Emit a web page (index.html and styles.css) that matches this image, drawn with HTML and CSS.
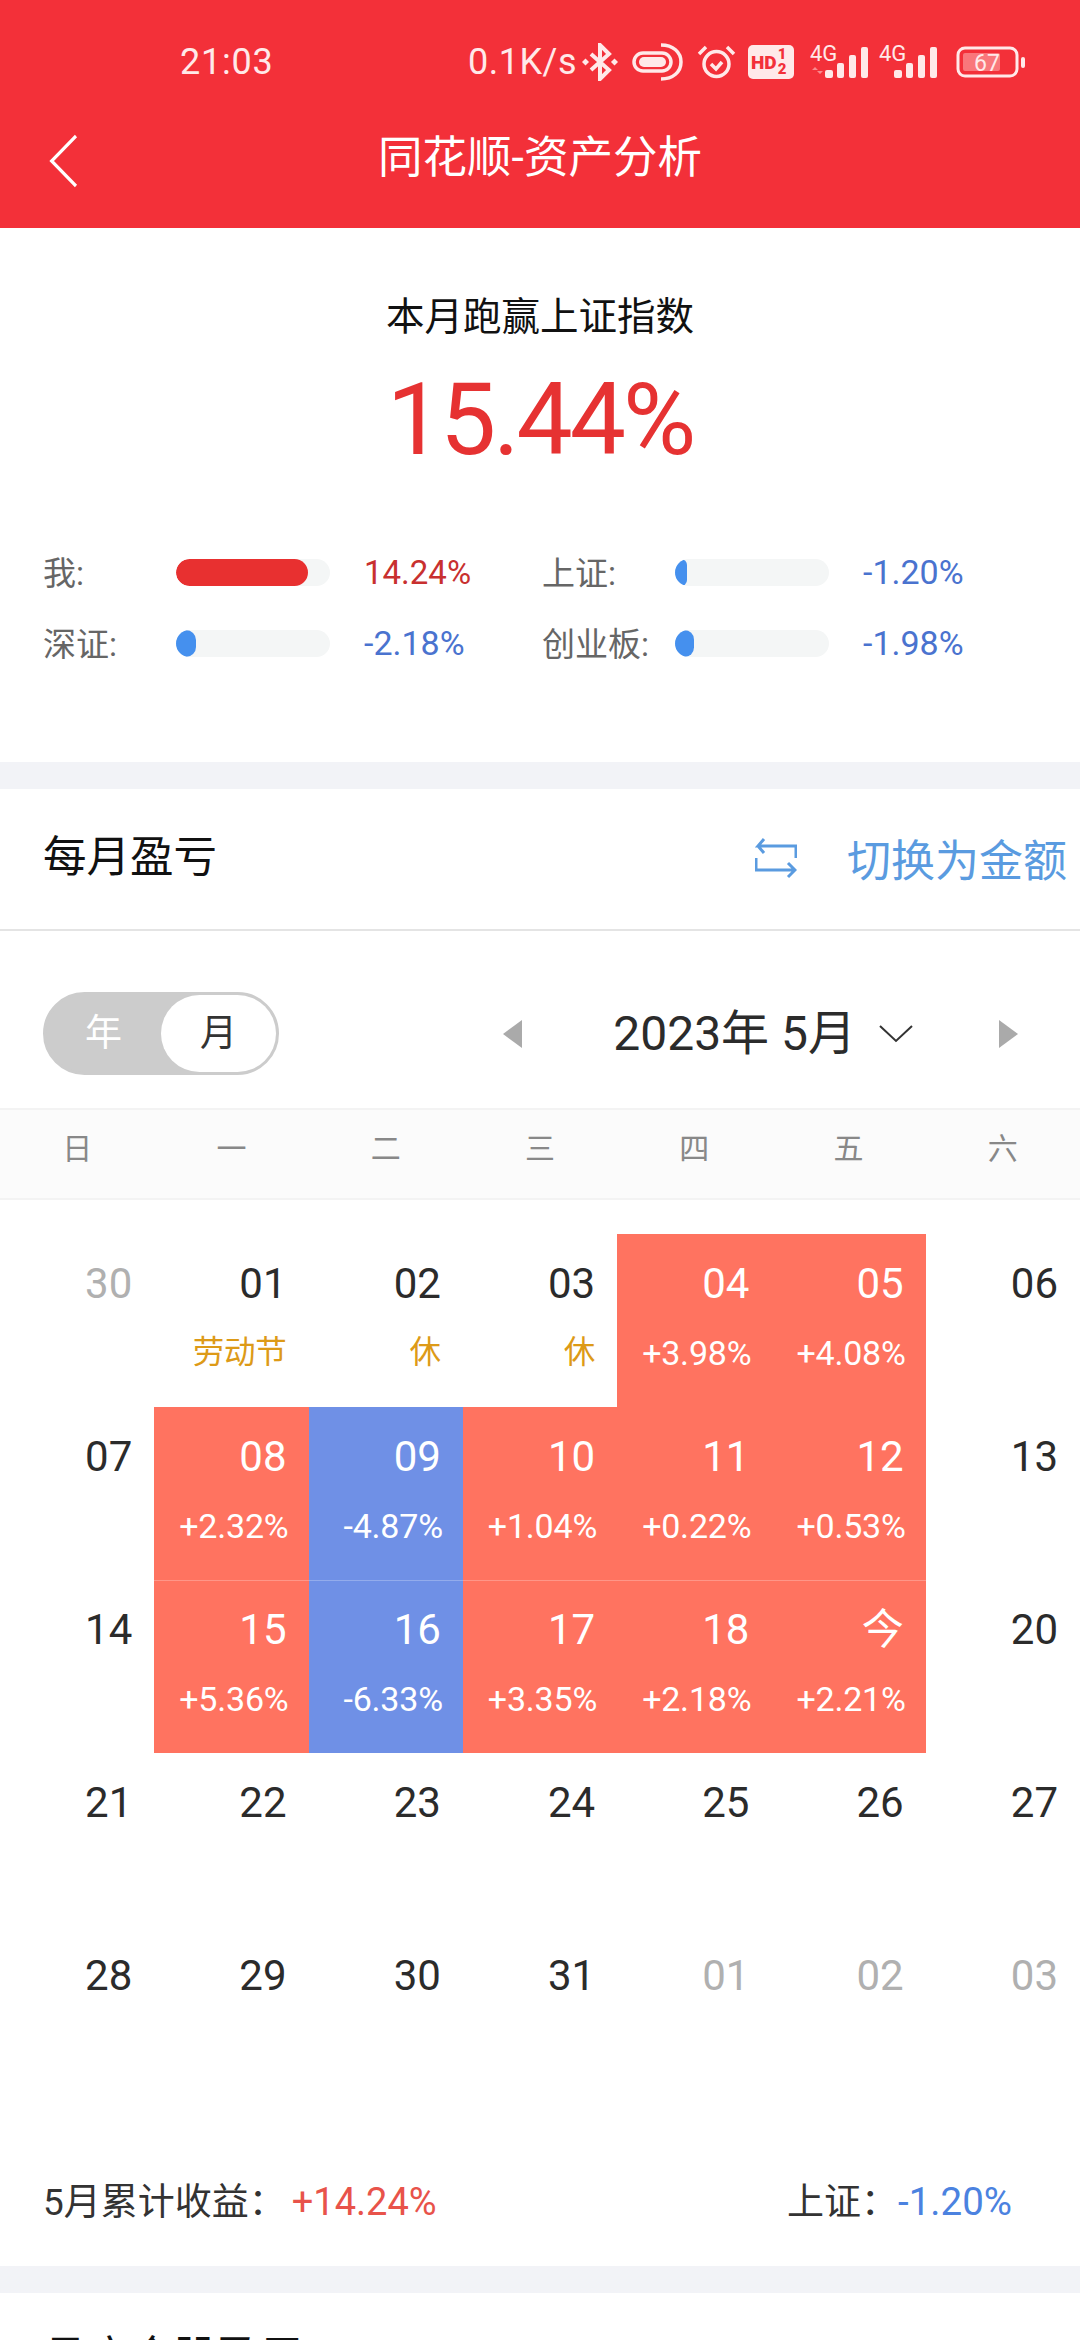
FILE: index.html
```html
<!DOCTYPE html>
<html lang="zh">
<head>
    <meta charset="UTF-8" />
    <meta name="viewport" content="width=device-width, initial-scale=1.0"/>
    <title>同花顺-资产分析</title>
    <link rel="stylesheet" href="styles.css">
</head>
<body>
<div class="page">
    <header class="header">
        <div class="status-bar">
            <span class="time">21:03</span>
            <span class="speed">0.1K/s</span>
            <svg class="ic-bt" width="36" height="38" viewBox="0 0 36 38" fill="none" stroke="#ffe9e9" stroke-width="4">
                <path d="M9 11l18 16-9 9V2l9 9L9 27"/>
                <rect x="1" y="16.5" width="5" height="5" fill="#ffe9e9" stroke="none" transform="rotate(45 3.5 19)"/>
                <rect x="30" y="16.5" width="5" height="5" fill="#ffe9e9" stroke="none" transform="rotate(45 32.5 19)"/>
            </svg>
            <svg class="ic-link" width="51" height="38" viewBox="0 0 51 38" fill="none" stroke="#ffe9e9" stroke-width="3.5">
                <rect x="2" y="10" width="37" height="18" rx="9"/>
                <rect x="7" y="14" width="27" height="10" rx="5" fill="#ffe9e9" stroke="none"/>
                <path d="M29 2c12 0 20 7 20 17s-8 17-20 17"/>
            </svg>
            <svg class="ic-alarm" width="39" height="36" viewBox="0 0 39 36" fill="none" stroke="#ffe9e9" stroke-width="3.5">
                <circle cx="19.5" cy="20" r="12.5"/>
                <path d="M14 20l5 5 6-7M2 10l7-7M37 10l-7-7"/>
            </svg>
            <span class="ic-hd">HD<span class="hd-num">1<br>2</span></span>
            <svg class="ic-signal" width="62" height="40" viewBox="0 -8 62 40">
                <text class="sig-text" x="0" y="15">4G</text>
                <path d="M2 24l3-3 3 3zM7 25l3 3 3-3z" fill="#f98a8e"/>
                <rect x="15" y="24" width="8" height="8" rx="2"/>
                <rect x="27" y="17" width="7" height="15" rx="2"/>
                <rect x="39" y="9" width="7" height="23" rx="2"/>
                <rect x="51" y="1" width="7" height="31" rx="2"/>
            </svg>
            <svg class="ic-signal" width="62" height="40" viewBox="0 -8 62 40">
                <text class="sig-text" x="0" y="15">4G</text>
                <rect x="15" y="24" width="8" height="8" rx="2"/>
                <rect x="27" y="17" width="7" height="15" rx="2"/>
                <rect x="39" y="9" width="7" height="23" rx="2"/>
                <rect x="51" y="1" width="7" height="31" rx="2"/>
            </svg>
            <svg class="ic-batt" width="69" height="32" viewBox="0 0 69 32">
                <rect x="2" y="2" width="59" height="28" rx="7" fill="none" stroke="#ffe9e9" stroke-width="3"/>
                <rect x="7" y="7" width="37" height="18" rx="2" fill="#f9777b"/>
                <rect x="65" y="11" width="4" height="11" rx="2" fill="#ffe9e9"/>
                <text class="batt-text" x="31" y="25" text-anchor="middle">67</text>
            </svg>
        </div>
        <div class="nav-bar">
            <svg class="back" width="32" height="54" viewBox="0 0 32 54" fill="none" stroke="#fff" stroke-width="3.5">
                <path d="M30 2L3 27l27 25" transform="matrix(.9 0 0 1 1 0)"/>
            </svg>
            <h1>同花顺-资产分析</h1>
        </div>
    </header>

    <section class="summary">
        <div class="summary-title">本月跑赢上证指数</div>
        <div class="summary-num">15.44%</div>
        <div class="compare">
            <div class="compare-item">
                <span class="compare-label">我:</span>
                <span class="bar"><i class="bar-fill red" style="width: 132px"></i></span>
                <span class="val-red">14.24%</span>
            </div>
            <div class="compare-item">
                <span class="compare-label">上证:</span>
                <span class="bar"><i class="bar-fill blue" style="width: 12px"></i></span>
                <span class="val-blue">-1.20%</span>
            </div>
            <div class="compare-item">
                <span class="compare-label">深证:</span>
                <span class="bar"><i class="bar-fill blue" style="width: 20px"></i></span>
                <span class="val-blue">-2.18%</span>
            </div>
            <div class="compare-item">
                <span class="compare-label">创业板:</span>
                <span class="bar"><i class="bar-fill blue" style="width: 19px"></i></span>
                <span class="val-blue">-1.98%</span>
            </div>
        </div>
    </section>

    <section class="panel">
        <div class="panel-head">
            <h2>每月盈亏</h2>
            <div class="switch-btn">
                <svg width="42" height="42" viewBox="0 0 42 42" fill="none" stroke="#5a9be0" stroke-width="3">
                    <path d="M9 2L3 9h38v12M1 21v12h38M33 26l7 7-7 7M3 9l6 7"/>
                </svg>
                <span>切换为金额</span>
            </div>
        </div>

        <div class="tools">
            <div class="toggle">
                <span class="toggle-off">年</span>
                <span class="toggle-on">月</span>
            </div>
            <div class="month-nav">
                <i class="tri tri-left"></i>
                <span class="month">2023年 5月</span>
                <svg class="month-arrow" width="34" height="18" viewBox="0 0 34 18" fill="none" stroke="#333" stroke-width="2">
                    <path d="M1 1l16 15L33 1"/>
                </svg>
                <i class="tri tri-right"></i>
            </div>
        </div>

        <div class="weekdays">
            <span>日</span><span>一</span><span>二</span><span>三</span><span>四</span><span>五</span><span>六</span>
        </div>

        <div class="calendar">
            <div class="day muted"><b>30</b></div>
            <div class="day"><b>01</b><small class="holiday">劳动节</small></div>
            <div class="day"><b>02</b><small class="holiday">休</small></div>
            <div class="day"><b>03</b><small class="holiday">休</small></div>
            <div class="day up"><b>04</b><small>+3.98%</small></div>
            <div class="day up"><b>05</b><small>+4.08%</small></div>
            <div class="day"><b>06</b></div>

            <div class="day"><b>07</b></div>
            <div class="day up"><b>08</b><small>+2.32%</small></div>
            <div class="day down"><b>09</b><small>-4.87%</small></div>
            <div class="day up"><b>10</b><small>+1.04%</small></div>
            <div class="day up"><b>11</b><small>+0.22%</small></div>
            <div class="day up"><b>12</b><small>+0.53%</small></div>
            <div class="day"><b>13</b></div>

            <div class="day"><b>14</b></div>
            <div class="day up line"><b>15</b><small>+5.36%</small></div>
            <div class="day down line"><b>16</b><small>-6.33%</small></div>
            <div class="day up line"><b>17</b><small>+3.35%</small></div>
            <div class="day up line"><b>18</b><small>+2.18%</small></div>
            <div class="day up line"><b>今</b><small>+2.21%</small></div>
            <div class="day"><b>20</b></div>

            <div class="day"><b>21</b></div>
            <div class="day"><b>22</b></div>
            <div class="day"><b>23</b></div>
            <div class="day"><b>24</b></div>
            <div class="day"><b>25</b></div>
            <div class="day"><b>26</b></div>
            <div class="day"><b>27</b></div>

            <div class="day"><b>28</b></div>
            <div class="day"><b>29</b></div>
            <div class="day"><b>30</b></div>
            <div class="day"><b>31</b></div>
            <div class="day muted"><b>01</b></div>
            <div class="day muted"><b>02</b></div>
            <div class="day muted"><b>03</b></div>
        </div>

        <div class="totals">
            <div>5月累计收益：<span class="total-up">+14.24%</span></div>
            <div>上证：<span class="total-down">-1.20%</span></div>
        </div>
    </section>

    <section class="next-panel">
        <h2>月度个股盈亏</h2>
    </section>
</div>
</body>
</html>
```

FILE: styles.css
```css
* {
    box-sizing: border-box;
    margin: 0;
    padding: 0;
}
html, body {
    height: 2340px;
    overflow: hidden;
}
body {
    font-family: Roboto, "Noto Sans CJK SC", sans-serif;
    background: #fff;
    color: #2b2b2b;
}
.page {
    height: 2340px;
    overflow: hidden;
}
h1, h2 {
    font-weight: 400;
}

/* header */
.header {
    height: 228px;
    background: #f33039;
    color: #fff;
}
.status-bar {
    height: 124px;
    display: flex;
    align-items: center;
    padding: 0 0 0 180px;
    color: #ffe9e9;
    font-size: 36px;
}
.time {
    width: 288px;
    letter-spacing: 0.8px;
}
.speed {
    width: 114px;
    letter-spacing: 0.5px;
}
.ic-link { margin-left: 14px; }
.ic-alarm { margin-left: 14px; }
.ic-hd {
    margin-left: 12px;
    width: 46px;
    height: 34px;
    border-radius: 5px;
    background: #ffe9e9;
    color: #f33039;
    font-size: 19px;
    font-weight: 900;
    display: flex;
    align-items: center;
    padding-left: 3px;
}
.hd-num {
    font-size: 15px;
    line-height: 15px;
    margin-left: 1px;
    text-align: center;
}
.ic-signal {
    margin-left: 16px;
    margin-top: -8px;
    fill: #ffe9e9;
}
.ic-signal + .ic-signal { margin-left: 7px; }
.ic-batt { margin-left: 15px; }
.sig-text {
    font-size: 22px;
    fill: #ffe9e9;
}
.batt-text {
    font-size: 23px;
    fill: #ffe9e9;
}
.nav-bar {
    height: 104px;
    position: relative;
    display: flex;
    align-items: center;
    justify-content: center;
}
.nav-bar h1 {
    font-size: 44.5px;
    line-height: 60px;
    margin-top: -36px;
}
.back {
    position: absolute;
    left: 48px;
    top: 10px;
}

/* summary */
.summary {
    height: 534px;
    padding-top: 64px;
    text-align: center;
}
.summary-title {
    font-size: 38.5px;
    line-height: 50px;
    color: #111;
}
.summary-num {
    margin-top: 28px;
    font-size: 100px;
    line-height: 100px;
    letter-spacing: -3px;
    color: #e63232;
}
.compare {
    margin-top: 82px;
    padding-left: 43px;
    display: grid;
    grid-template-columns: 499px 1fr;
    row-gap: 31px;
    text-align: left;
}
.compare-item {
    display: flex;
    align-items: center;
    height: 40px;
    font-size: 34px;
}
.compare-label {
    width: 133px;
    margin-top: -3px;
    font-size: 33px;
    color: #666;
}
.bar {
    width: 154px;
    height: 27px;
    margin-right: 34px;
    border-radius: 14px;
    background: #f4f6f6;
    overflow: hidden;
}
.bar-fill {
    display: block;
    height: 100%;
    border-radius: 14px;
}
.bar-fill.red { background: #e83030; }
.bar-fill.blue { background: #4590ee; }
.val-red {
    font-size: 33px;
    color: #c8302f;
}
.val-blue { color: #4a73cf; }

/* monthly panel */
.panel {
    border-top: 27px solid #f2f3f7;
}
.panel-head {
    height: 142px;
    display: flex;
    align-items: center;
    justify-content: space-between;
    padding: 0 13px 2px 43px;
    border-bottom: 2px solid #e4e4e4;
}
h2 {
    font-size: 43.5px;
    line-height: 60px;
    color: #111;
}
.switch-btn {
    display: flex;
    align-items: center;
    gap: 50px;
    font-size: 44px;
    color: #5a9be0;
}
.tools {
    height: 177px;
    display: flex;
    align-items: center;
    justify-content: space-between;
    padding: 61px 62px 33px 43px;
}
.toggle {
    width: 236px;
    height: 83px;
    border: 3px solid #ccc;
    border-radius: 42px;
    background: #ccc;
    display: flex;
    font-size: 37px;
    line-height: 77px;
    text-align: center;
}
.toggle-off {
    width: 115px;
    color: #fff;
}
.toggle-on {
    flex: 1;
    background: #fff;
    border-radius: 39px;
    color: #333;
}
.month-nav {
    display: flex;
    align-items: center;
}
.month {
    margin-left: 91px;
    font-size: 48px;
    line-height: 60px;
    color: #2b2b2b;
}
.month-arrow {
    margin: 0 86px 0 23px;
}
.tri {
    width: 0;
    height: 0;
    border-top: 14px solid transparent;
    border-bottom: 14px solid transparent;
}
.tri-left { border-right: 19px solid #aaa; }
.tri-right { border-left: 19px solid #aaa; }
.weekdays {
    height: 92px;
    display: grid;
    grid-template-columns: repeat(7, 1fr);
    padding-top: 19px;
    background: #fbfbfb;
    border-top: 2px solid #f3f3f3;
    border-bottom: 2px solid #f3f3f3;
    font-size: 30px;
    line-height: 40px;
    text-align: center;
    color: #888;
}
.calendar {
    margin-top: 34px;
    display: grid;
    grid-template-columns: repeat(7, 1fr);
    grid-auto-rows: 173px;
}
.day {
    padding: 27px 22px 0 0;
    text-align: right;
}
.day b {
    display: block;
    font-size: 42px;
    font-weight: 400;
    line-height: 46px;
}
.day small {
    display: block;
    margin: 26px -2px 0 0;
    font-size: 34px;
    line-height: 40px;
    letter-spacing: -0.2px;
}
.day small.holiday {
    margin-right: 0;
    font-size: 31.5px;
    color: #dd9a17;
}
.muted { color: #b0b0b0; }
.up, .down { color: #fff; }
.up { background: #ff7360; }
.down { background: #6f90e6; }
.line { box-shadow: inset 0 1px 0 rgba(255, 255, 255, 0.25); }
.totals {
    height: 167px;
    display: flex;
    justify-content: space-between;
    padding: 78px 68px 0 43px;
    font-size: 37px;
    line-height: 50px;
    color: #333;
}
.total-up {
    margin-left: 6px;
    font-size: 38px;
    color: #e8534a;
}
.total-down {
    font-size: 38.5px;
    color: #4b82e0;
}

/* next panel */
.next-panel {
    border-top: 27px solid #f2f3f7;
    padding: 35px 0 0 43px;
}
```
